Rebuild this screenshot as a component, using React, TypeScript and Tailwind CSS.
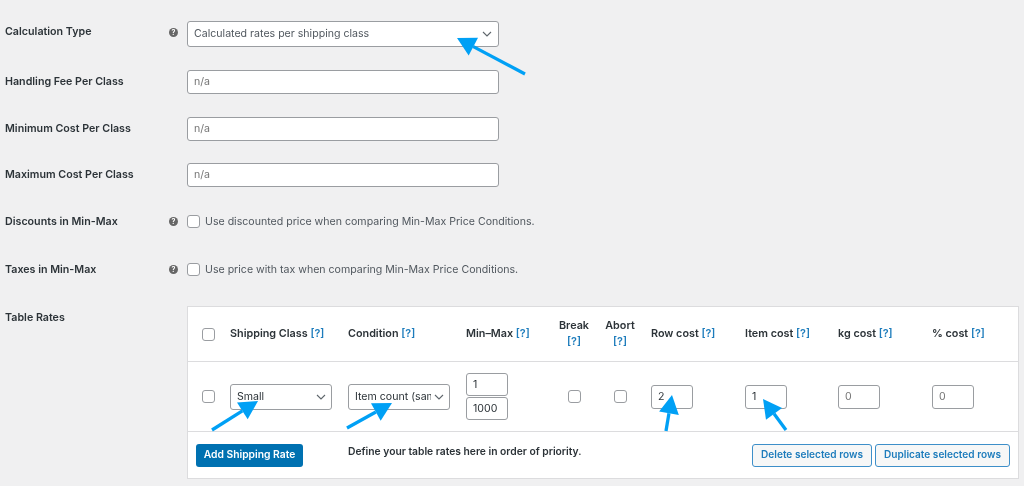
import React from "react";

const font = "font-['Inter','Liberation_Sans',sans-serif]";

function Help({ shift = "" }: { shift?: string }) {
  return (
    <span className={`flex h-[9px] w-[9px] items-center justify-center rounded-full bg-[#666] text-[7px] font-bold leading-none text-white ${shift}`}>?</span>
  );
}

function Box() {
  return <span className="block h-[13px] w-[13px] rounded-[3px] border border-[#9a9da1] bg-white" />;
}

function Chevron() {
  return (
    <svg width="10" height="6" viewBox="0 0 10 6" fill="none" stroke="#5f666c" strokeWidth="1.1">
      <path d="M1 1l4 4 4-4" />
    </svg>
  );
}

function Row({ label, help, h, mb, children, labelShift = "", helpShift = "" }: { label: string; help?: boolean; h: string; mb: string; children: React.ReactNode; labelShift?: string; helpShift?: string }) {
  return (
    <div className={`flex items-center ${h} ${mb}`}>
      <div className={`w-[168px] pl-[5px] text-[10.7px] font-semibold text-[#2c3338] ${labelShift}`}>{label}</div>
      <div className="flex w-[19px] justify-start pl-[1px]">{help ? <Help shift={helpShift} /> : null}</div>
      {children}
    </div>
  );
}

function TextField() {
  return (
    <div className="flex h-[24px] w-[312px] items-center rounded-[3px] border border-[#9a9da1] bg-white pl-[6px] text-[10.6px] text-[#757575]">n/a</div>
  );
}

function Check({ text }: { text: string }) {
  return (
    <div className="flex items-center gap-[5px] text-[10.6px] text-[#50575e]">
      <Box />
      <span>{text}</span>
    </div>
  );
}

function Q() {
  return <span className="text-[#1d7cbc]">[?]</span>;
}

function Head({ children, center }: { children: React.ReactNode; center?: boolean }) {
  return <div className={`text-[10.8px] font-semibold leading-[16px] text-[#2c3338] ${center ? "text-center" : ""}`}>{children}</div>;
}

function Cost({ value, dark }: { value: string; dark?: boolean }) {
  return (
    <div className={`flex h-[24px] w-[42px] items-center rounded-[3px] border border-[#9a9da1] bg-white pl-[6px] text-[10.6px] ${dark ? "text-[#2c3338]" : "text-[#757575]"}`}>{value}</div>
  );
}

function Arrow({ x1, y1, x2, y2 }: { x1: number; y1: number; x2: number; y2: number }) {
  const dx = x2 - x1;
  const dy = y2 - y1;
  const len = Math.hypot(dx, dy);
  const ux = dx / len;
  const uy = dy / len;
  const bx = x2 - ux * 18.5;
  const by = y2 - uy * 18.5;
  const nx = -uy;
  const ny = ux;
  return (
    <>
      <line x1={x1} y1={y1} x2={bx} y2={by} stroke="#00a0f5" strokeWidth="3.3" />
      <polygon points={`${x2},${y2} ${bx + nx * 10},${by + ny * 10} ${bx - nx * 10},${by - ny * 10}`} fill="#00a0f5" />
    </>
  );
}

const cols = "grid grid-cols-[42px_118px_118px_85px_46px_54px_94px_93px_94px_1fr]";

export default function App() {
  return (
    <div className={`relative h-[486px] w-[1024px] overflow-hidden bg-[#f0f0f1] pt-[21px] blur-[0.35px] ${font}`}>
      <Row label="Calculation Type" help h="h-[26px]" mb="mb-[23px]" labelShift="-translate-y-[2px]" helpShift="-translate-y-[2px]">
        <div className="flex h-[26px] w-[312px] items-center justify-between rounded-[3px] border border-[#9a9da1] bg-white pl-[6px] pr-[6px] text-[10.6px] text-[#50575e]">
          <span>Calculated rates per shipping class</span>
          <Chevron />
        </div>
      </Row>
      <Row label="Handling Fee Per Class" h="h-[24px]" mb="mb-[23px]"><TextField /></Row>
      <Row label="Minimum Cost Per Class" h="h-[24px]" mb="mb-[22px]"><TextField /></Row>
      <Row label="Maximum Cost Per Class" h="h-[24px]" mb="mb-[28px]"><TextField /></Row>
      <Row label="Discounts in Min-Max" help h="h-[13px]" mb="mb-[35px]" labelShift="translate-y-[1px]"><Check text="Use discounted price when comparing Min-Max Price Conditions." /></Row>
      <Row label="Taxes in Min-Max" help h="h-[13px]" mb="mb-[30px]" labelShift="translate-y-[1px]"><Check text="Use price with tax when comparing Min-Max Price Conditions." /></Row>

      <div className="flex">
        <div className="w-[187px] pl-[5px] pt-[4px] text-[10.7px] font-semibold text-[#2c3338]">Table Rates</div>
        <div className="h-[173px] w-[832px] border border-[#dcdcde] bg-white">
          <div className={`${cols} h-[55px] items-center border-b border-[#dcdcde]`}>
            <div className="pl-[14px]"><Box /></div>
            <Head>Shipping Class <Q /></Head>
            <Head>Condition <Q /></Head>
            <Head>Min–Max <Q /></Head>
            <Head center>Break<br /><Q /></Head>
            <Head><span className="block w-[46px] text-center">Abort<br /><Q /></span></Head>
            <Head>Row cost <Q /></Head>
            <Head>Item cost <Q /></Head>
            <Head>kg cost <Q /></Head>
            <Head>% cost <Q /></Head>
          </div>
          <div className={`${cols} h-[70px] items-center border-b border-[#dcdcde]`}>
            <div className="pl-[14px]"><Box /></div>
            <div className="flex h-[26px] w-[102px] items-center justify-between rounded-[3px] border border-[#9a9da1] bg-white pl-[6px] pr-[5px] text-[10.6px] text-[#2c3338]">
              <span>Small</span><Chevron />
            </div>
            <div className="flex h-[26px] w-[102px] items-center justify-between rounded-[3px] border border-[#9a9da1] bg-white pl-[6px] pr-[5px] text-[10.6px] text-[#2c3338]">
              <span className="w-[76px] overflow-hidden whitespace-nowrap">Item count (same)</span><Chevron />
            </div>
            <div className="flex flex-col gap-[1px]">
              <div className="flex h-[23px] w-[42px] items-center rounded-[3px] border border-[#9a9da1] bg-white pl-[6px] text-[10.6px] text-[#2c3338]">1</div>
              <div className="flex h-[23px] w-[42px] items-center rounded-[3px] border border-[#9a9da1] bg-white pl-[6px] text-[10.6px] text-[#2c3338]">1000</div>
            </div>
            <div className="flex justify-center"><Box /></div>
            <div className="w-[46px]"><div className="flex justify-center"><Box /></div></div>
            <Cost value="2" dark />
            <Cost value="1" dark />
            <Cost value="0" />
            <Cost value="0" />
          </div>
          <div className="flex h-[46px] items-center justify-between pb-[1px] pl-[8px] pr-[8px] pt-[1px]">
            <div className="flex items-center">
              <div className="flex h-[23px] w-[107px] items-center justify-center rounded-[3px] bg-[#0071b1] text-[10.3px] font-semibold text-white">Add Shipping Rate</div>
              <div className="ml-[45px] -translate-y-[3px] text-[10.3px] font-semibold text-[#2c3338]">Define your table rates here in order of priority.</div>
            </div>
            <div className="flex gap-[3px]">
              <div className="flex h-[23px] w-[120px] items-center justify-center rounded-[3px] border border-[#3d8fc9] bg-[#f6f7f7] text-[10.1px] font-semibold text-[#1d7cbc]">Delete selected rows</div>
              <div className="flex h-[23px] w-[135px] items-center justify-center rounded-[3px] border border-[#3d8fc9] bg-[#f6f7f7] text-[10.1px] font-semibold text-[#1d7cbc]">Duplicate selected rows</div>
            </div>
          </div>
        </div>
      </div>

      <svg className="pointer-events-none absolute left-0 top-0" width="1024" height="486">
        <Arrow x1={525} y1={74} x2={457} y2={38} />
        <Arrow x1={212} y1={430} x2={258} y2={401} />
        <Arrow x1={347} y1={428} x2={392} y2={403} />
        <Arrow x1={666} y1={431} x2={672} y2={395} />
        <Arrow x1={786} y1={430} x2={763} y2={399} />
      </svg>
    </div>
  );
}
